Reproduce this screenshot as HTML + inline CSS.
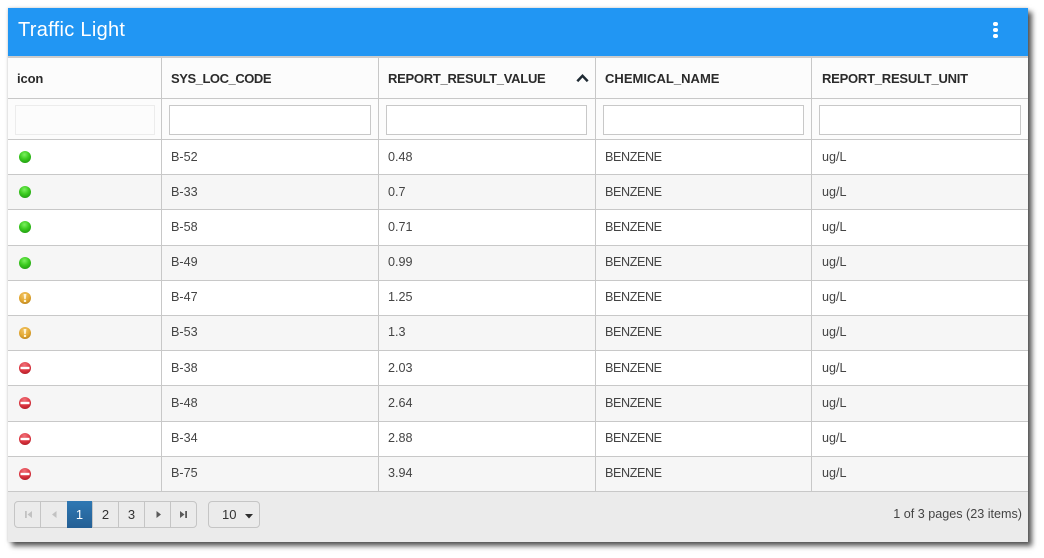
<!DOCTYPE html>
<html>
<head>
<meta charset="utf-8">
<style>
html,body{margin:0;padding:0;background:#fff;width:1044px;height:558px;overflow:hidden}
body{font-family:"Liberation Sans",sans-serif;position:relative}
#p{position:absolute;left:8px;top:8px;width:1020px;height:534px;background:#fff;box-shadow:4px 4px 5px 0 rgba(0,0,0,.65),0 0 3px rgba(0,0,0,.2)}
.a{position:absolute;white-space:nowrap}
.h{left:0;top:0;width:1020px;height:48px;background:#2196f3}
.title{left:10px;top:10px;font-size:20px;line-height:24px;color:#fff;letter-spacing:.3px}
.dot{width:4.6px;height:4.6px;border-radius:50%;background:#fff;left:985px}
.hl{left:0;width:1020px;height:1px;background:#c8c8c8}
.vl{width:1px;background:#c8c8c8;top:50px;height:433px}
.th{font-size:13px;font-weight:bold;color:#2b2b2b;top:63px;line-height:16px}
.in{box-sizing:border-box;top:97px;height:30px;background:#fff;border:1px solid #c8c8c8}
.r{left:0;width:1020px;background:#f6f6f6}
.td{font-size:12.6px;color:#444;line-height:16px}
.b{letter-spacing:-.4px}
.pg{box-sizing:border-box;left:6px;top:493px;width:183px;height:27px;border:1px solid #c5c5c5;border-radius:4px}
.sep{width:1px;height:26px;top:493px;background:#c5c5c5}
.cur{left:59px;top:493px;width:25px;height:27px;background:linear-gradient(#2f78b3,#245f94);color:#fff;text-align:center;font-size:13px;line-height:27px}
.n{top:493px;width:26px;height:27px;text-align:center;font-size:13px;line-height:27px;color:#333}
.sel{box-sizing:border-box;left:200px;top:493px;width:52px;height:27px;border:1px solid #c5c5c5;border-radius:4px}
svg{display:block;position:absolute;overflow:visible}
</style>
</head>
<body>
<svg width="0" height="0" style="position:absolute">
<defs>
<radialGradient id="g" cx=".45" cy=".3" r=".75"><stop offset="0" stop-color="#7cf060"/><stop offset=".5" stop-color="#3ccc20"/><stop offset="1" stop-color="#1f9a10"/></radialGradient>
<radialGradient id="y" cx=".45" cy=".3" r=".75"><stop offset="0" stop-color="#f2c66a"/><stop offset=".6" stop-color="#e3a832"/><stop offset="1" stop-color="#b9821c"/></radialGradient>
<radialGradient id="d" cx=".45" cy=".25" r=".8"><stop offset="0" stop-color="#f0727a"/><stop offset=".6" stop-color="#dc3540"/><stop offset="1" stop-color="#ae1a24"/></radialGradient>
<symbol id="ig" viewBox="0 0 12 12"><circle cx="6" cy="6" r="6" fill="url(#g)"/></symbol>
<symbol id="iy" viewBox="0 0 12 12"><circle cx="6" cy="6" r="6" fill="url(#y)"/><path d="M4.6 2h2.8L6.7 7.2H5.3z" fill="#fff4d6"/><rect x="4.9" y="8" width="2.2" height="2" fill="#fff4d6"/></symbol>
<symbol id="id" viewBox="0 0 12 12"><circle cx="6" cy="6" r="6" fill="url(#d)"/><rect x="1.5" y="4.8" width="9" height="2.4" fill="#fff"/></symbol>
</defs>
</svg>
<div id="p">
<div class="a h"></div>
<div class="a title">Traffic Light</div>
<div class="a dot" style="top:13.7px"></div>
<div class="a dot" style="top:19.7px"></div>
<div class="a dot" style="top:25.7px"></div>

<div class="a" style="left:0;top:48px;width:1020px;height:2px;background:#ccc"></div>
<div class="a" style="left:0;top:50px;width:1020px;height:81px;background:#fcfcfc"></div>

<div class="a r" style="top:167px;height:34px"></div>
<div class="a r" style="top:237px;height:35px"></div>
<div class="a r" style="top:308px;height:34px"></div>
<div class="a r" style="top:378px;height:35px"></div>
<div class="a r" style="top:449px;height:34px"></div>

<div class="a hl" style="top:90px"></div>
<div class="a hl" style="top:131px"></div>
<div class="a hl" style="top:166px"></div>
<div class="a hl" style="top:201px"></div>
<div class="a hl" style="top:237px"></div>
<div class="a hl" style="top:272px"></div>
<div class="a hl" style="top:307px"></div>
<div class="a hl" style="top:342px"></div>
<div class="a hl" style="top:377px"></div>
<div class="a hl" style="top:413px"></div>
<div class="a hl" style="top:448px"></div>

<div class="a vl" style="left:153px"></div>
<div class="a vl" style="left:370px"></div>
<div class="a vl" style="left:587px"></div>
<div class="a vl" style="left:803px"></div>

<div class="a th" style="left:9px;letter-spacing:-.12px">icon</div>
<div class="a th" style="left:163px;letter-spacing:-.45px">SYS_LOC_CODE</div>
<div class="a th" style="left:380px;letter-spacing:-.28px">REPORT_RESULT_VALUE</div>
<div class="a th" style="left:597px;letter-spacing:.03px">CHEMICAL_NAME</div>
<div class="a th" style="left:814px;letter-spacing:-.23px">REPORT_RESULT_UNIT</div>
<svg style="left:568px;top:65px" width="13" height="10" viewBox="0 0 13 10"><path d="M1.3 8.2 6.5 2.8 11.7 8.2" fill="none" stroke="#1f2a33" stroke-width="2.5"/></svg>

<div class="a in" style="left:7px;width:140px;background:#fcfcfc;border-color:#ececec"></div>
<div class="a in" style="left:161px;width:202px"></div>
<div class="a in" style="left:378px;width:201px"></div>
<div class="a in" style="left:595px;width:201px"></div>
<div class="a in" style="left:811px;width:202px"></div>

<svg style="left:11px;top:143px" width="12" height="12"><use href="#ig"/></svg>
<svg style="left:11px;top:178px" width="12" height="12"><use href="#ig"/></svg>
<svg style="left:11px;top:213px" width="12" height="12"><use href="#ig"/></svg>
<svg style="left:11px;top:249px" width="12" height="12"><use href="#ig"/></svg>
<svg style="left:11px;top:284px" width="12" height="12"><use href="#iy"/></svg>
<svg style="left:11px;top:319px" width="12" height="12"><use href="#iy"/></svg>
<svg style="left:11px;top:354px" width="12" height="12"><use href="#id"/></svg>
<svg style="left:11px;top:389px" width="12" height="12"><use href="#id"/></svg>
<svg style="left:11px;top:425px" width="12" height="12"><use href="#id"/></svg>
<svg style="left:11px;top:460px" width="12" height="12"><use href="#id"/></svg>

<div class="a td" style="left:163px;top:141px">B-52</div><div class="a td" style="left:380px;top:141px">0.48</div><div class="a td b" style="left:597px;top:141px">BENZENE</div><div class="a td" style="left:814px;top:141px">ug/L</div>
<div class="a td" style="left:163px;top:176px">B-33</div><div class="a td" style="left:380px;top:176px">0.7</div><div class="a td b" style="left:597px;top:176px">BENZENE</div><div class="a td" style="left:814px;top:176px">ug/L</div>
<div class="a td" style="left:163px;top:211px">B-58</div><div class="a td" style="left:380px;top:211px">0.71</div><div class="a td b" style="left:597px;top:211px">BENZENE</div><div class="a td" style="left:814px;top:211px">ug/L</div>
<div class="a td" style="left:163px;top:246px">B-49</div><div class="a td" style="left:380px;top:246px">0.99</div><div class="a td b" style="left:597px;top:246px">BENZENE</div><div class="a td" style="left:814px;top:246px">ug/L</div>
<div class="a td" style="left:163px;top:281px">B-47</div><div class="a td" style="left:380px;top:281px">1.25</div><div class="a td b" style="left:597px;top:281px">BENZENE</div><div class="a td" style="left:814px;top:281px">ug/L</div>
<div class="a td" style="left:163px;top:316px">B-53</div><div class="a td" style="left:380px;top:316px">1.3</div><div class="a td b" style="left:597px;top:316px">BENZENE</div><div class="a td" style="left:814px;top:316px">ug/L</div>
<div class="a td" style="left:163px;top:352px">B-38</div><div class="a td" style="left:380px;top:352px">2.03</div><div class="a td b" style="left:597px;top:352px">BENZENE</div><div class="a td" style="left:814px;top:352px">ug/L</div>
<div class="a td" style="left:163px;top:387px">B-48</div><div class="a td" style="left:380px;top:387px">2.64</div><div class="a td b" style="left:597px;top:387px">BENZENE</div><div class="a td" style="left:814px;top:387px">ug/L</div>
<div class="a td" style="left:163px;top:422px">B-34</div><div class="a td" style="left:380px;top:422px">2.88</div><div class="a td b" style="left:597px;top:422px">BENZENE</div><div class="a td" style="left:814px;top:422px">ug/L</div>
<div class="a td" style="left:163px;top:457px">B-75</div><div class="a td" style="left:380px;top:457px">3.94</div><div class="a td b" style="left:597px;top:457px">BENZENE</div><div class="a td" style="left:814px;top:457px">ug/L</div>

<div class="a" style="left:0;top:483px;width:1020px;height:51px;background:#ebebeb;border-top:1px solid #c8c8c8;box-sizing:border-box"></div>

<div class="a pg"></div>
<div class="a sep" style="left:32px"></div>
<div class="a sep" style="left:84px"></div>
<div class="a sep" style="left:110px"></div>
<div class="a sep" style="left:136px"></div>
<div class="a sep" style="left:162px"></div>
<div class="a cur">1</div>
<div class="a n" style="left:84.5px">2</div>
<div class="a n" style="left:110.5px">3</div>
<svg style="left:16px;top:502px" width="9" height="9" viewBox="0 0 9 9"><path d="M1 1h1.8v7H1zM8 1v7L3.5 4.5z" fill="#c2c2c2"/></svg>
<svg style="left:42px;top:502px" width="9" height="9" viewBox="0 0 9 9"><path d="M6.5 1v7L2 4.5z" fill="#c2c2c2"/></svg>
<svg style="left:146px;top:502px" width="9" height="9" viewBox="0 0 9 9"><path d="M2.5 1v7L7 4.5z" fill="#5a5a5a"/></svg>
<svg style="left:171px;top:502px" width="9" height="9" viewBox="0 0 9 9"><path d="M1 1v7l4.5-3.5zM6.2 1H8v7H6.2z" fill="#5a5a5a"/></svg>

<div class="a sel"></div>
<div class="a" style="left:214px;top:493px;font-size:13px;line-height:27px;color:#333">10</div>
<svg style="left:237px;top:506px" width="8" height="5" viewBox="0 0 8 5"><path d="M0 0h8L4 4.5z" fill="#2e2e2e"/></svg>

<div class="a td" style="right:6px;top:498px">1 of 3 pages (23 items)</div>
</div>
</body>
</html>
